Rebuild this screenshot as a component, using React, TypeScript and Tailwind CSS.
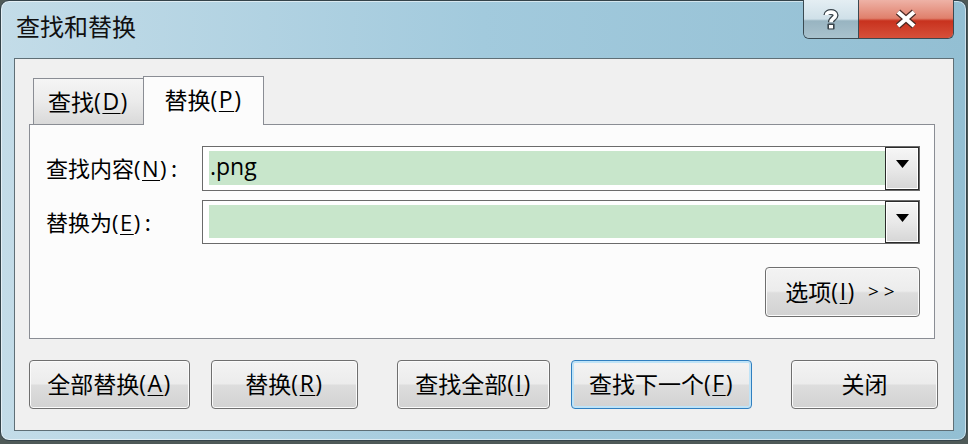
import React from "react";

// mnemonic letter in parentheses, underlined like a Win7 access key
const Mn = ({ k }: { k: string }) => (
  <span className="font-['Open_Sans','Noto_Sans_CJK_SC',sans-serif] tracking-[1.5px]">
    (<span className="underline underline-offset-[3px] decoration-1">{k}</span>)
  </span>
);

const DropButton = () => (
  <div className="w-[34px] h-full border border-[#2b2b2b] bg-gradient-to-b from-[#f6f6f6] via-[#e9e9e9] to-[#d6d6d6] flex items-start justify-center pt-[12px] shadow-[inset_0_0_0_1px_#ffffff]">
    <svg width="13" height="8" viewBox="0 0 13 8">
      <path d="M0 0h13L6.5 8z" fill="#000" />
    </svg>
  </div>
);

const ComboBox = ({ value, h }: { value?: string; h: string }) => (
  <div className={`flex-1 ${h} border border-[#6b6b6b] bg-white flex`}>
    <div className="flex-1 pl-[6px] pt-[4px] pb-[5px] flex">
      <div className="flex-1 bg-[#c8e6cb] flex items-center pl-[1px] text-[23px] text-black font-['Open_Sans','Noto_Sans_CJK_SC',sans-serif] leading-none pb-[4px]">
        {value}
      </div>
    </div>
    <DropButton />
  </div>
);

const Btn = ({
  children,
  w,
  focus,
  className = "",
}: {
  children: React.ReactNode;
  w: string;
  focus?: boolean;
  className?: string;
}) => (
  <button
    className={`${w} shrink-0 h-full rounded-[4px] border ${
      focus
        ? "border-[#2f7fc0] shadow-[inset_0_0_0_2px_#bfe3f7]"
        : "border-[#6f6f6f] shadow-[inset_0_0_0_1px_#fbfbfb]"
    } bg-[linear-gradient(to_bottom,#f3f3f3_0%,#ececec_48%,#dddddd_52%,#d2d2d2_100%)] text-[23px] text-black flex items-center justify-center leading-none pb-[2px] whitespace-nowrap ${className}`}
  >
    {children}
  </button>
);

export default function App() {
  return (
    <div className="w-[968px] h-[444px] bg-[#4f5a58] font-['Noto_Sans_CJK_SC','Noto_Sans',sans-serif] text-black">
      <div className="w-[967px] h-[441px] rounded-[9px] border border-[#34434a] bg-gradient-to-r from-[#c3dce8] via-[#a2cadd] to-[#93bfd3] shadow-[inset_0_0_0_1px_rgba(255,255,255,0.55)] pl-[13px] pr-[12px] pb-[9px] flex flex-col">
        {/* title bar */}
        <div className="h-[57px] flex justify-between items-start">
          <div className="ml-[2px] mt-[13px] text-[24px] leading-none text-[#111]">查找和替换</div>
          <div className="-mt-px flex h-[39px] rounded-b-[6px] border border-t-0 border-[#3a4a52] overflow-hidden">
            <div className="w-[55px] h-full bg-[linear-gradient(to_bottom,#e4eef3_0%,#cfe0e8_50%,#98b4c1_55%,#a9c2cd_100%)] border-r border-[#3a4a52] flex items-center justify-center">
              <svg width="18" height="24" viewBox="0 0 18 24">
                <g fill="none" strokeLinecap="butt">
                  <path d="M4.5 8C4.5 4.2 13.5 4 13.5 8.2c0 3-4.5 3.4-4.5 7" stroke="#3a454c" strokeWidth="6.2" />
                  <rect x="5.4" y="16.6" width="7.2" height="6" rx="1" fill="#3a454c" />
                  <path d="M4.5 8C4.5 4.2 13.5 4 13.5 8.2c0 3-4.5 3.4-4.5 7" stroke="#fff" strokeWidth="3.6" />
                  <rect x="7" y="18" width="4" height="3.4" fill="#fff" />
                </g>
              </svg>
            </div>
            <div className="w-[94px] h-full bg-[linear-gradient(to_bottom,#eeb2a6_0%,#e0806c_48%,#c8321e_55%,#d6503a_100%)] flex items-center justify-center">
              <svg width="26" height="20" viewBox="0 0 26 20">
                <g fill="none">
                  <path d="M5 3l16 14M21 3L5 17" stroke="#4a2a25" strokeWidth="6.4" />
                  <path d="M5 3l16 14M21 3L5 17" stroke="#fff" strokeWidth="4" />
                </g>
              </svg>
            </div>
          </div>
        </div>

        {/* client area */}
        <div className="flex-1 border border-[#5f6f76] bg-[#f0f0f0] pl-[14px] pr-[18px] pt-[18px] flex flex-col">
          {/* tabs */}
          <div className="h-[48px] flex items-end pl-[4px] -mb-px relative z-10">
            <div className="w-[111px] h-[46px] border border-b-0 border-[#8a8d94] bg-gradient-to-b from-[#f5f5f5] via-[#ebebeb] to-[#d9d9d9] flex items-center justify-center text-[23px] leading-none pb-[1px] mb-px">
              查找<Mn k="D" />
            </div>
            <div className="w-[121px] h-[49px] -ml-px border border-b-0 border-[#8a8d94] bg-[#fcfcfc] flex items-center justify-center text-[23px] leading-none pb-[4px]">
              替换<Mn k="P" />
            </div>
          </div>

          {/* panel */}
          <div className="h-[215px] border border-[#8a8d94] bg-[#fcfcfc] pl-[16px] pr-[14px] pt-[21px] flex flex-col">
            <div className="flex items-center">
              <div className="w-[156px] text-[22px] leading-none pb-[2px] whitespace-nowrap">
                查找内容<Mn k="N" /><span className="ml-[3px]">:</span>
              </div>
              <ComboBox value=".png" h="h-[45px]" />
            </div>
            <div className="flex items-center mt-[9px]">
              <div className="w-[156px] text-[22px] leading-none pb-[2px] whitespace-nowrap">
                替换为<Mn k="E" /><span className="ml-[3px]">:</span>
              </div>
              <ComboBox h="h-[44px]" />
            </div>
            <div className="flex justify-end mt-[23px] h-[50px]">
              <Btn w="w-[155px]">
                选项<Mn k="I" />
                <span className="ml-[12px] tracking-[5px] font-['Open_Sans',sans-serif] text-[19px]">&gt;&gt;</span>
              </Btn>
            </div>
          </div>

          {/* bottom buttons */}
          <div className="mt-[21px] h-[49px] flex">
            <Btn w="w-[161px]">
              全部替换<Mn k="A" />
            </Btn>
            <Btn w="w-[147px]" className="ml-[21px]">
              替换<Mn k="R" />
            </Btn>
            <Btn w="w-[153px]" className="ml-[39px]">
              查找全部<Mn k="I" />
            </Btn>
            <Btn w="w-[181px]" focus className="ml-[21px]">
              查找下一个<Mn k="F" />
            </Btn>
            <Btn w="w-[147px]" className="ml-[39px]">
              关闭
            </Btn>
          </div>
        </div>
      </div>
    </div>
  );
}
